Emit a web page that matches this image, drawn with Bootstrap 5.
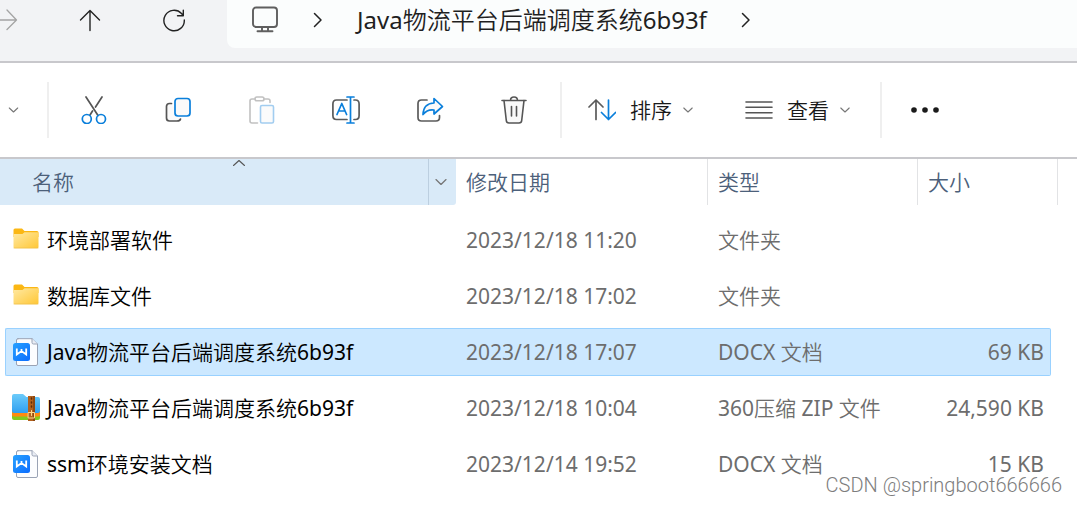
<!DOCTYPE html>
<html lang="zh-CN">
<head>
<meta charset="utf-8">
<meta name="viewport" content="width=device-width, initial-scale=1">
<title>Java物流平台后端调度系统6b93f</title>
<link href="https://cdn.jsdelivr.net/npm/bootstrap@5.3.0/dist/css/bootstrap.min.css" rel="stylesheet">
<style>
  body { font-family: "Noto Sans", "Noto Sans CJK SC", sans-serif; font-size: 21px; line-height: 28px; color: #000; background: #fff; }
  svg { display: block; flex: none; fill: none; stroke-linecap: round; stroke-linejoin: round; }
  button { border: 0; background: none; padding: 0; color: inherit; }

  .nav-strip { background: #f2f3f5; border-bottom: 2px solid #c8c8cc; padding-bottom: 13px; }
  .nav-strip > button { width: 84px; height: 40px; }
  .nav-strip > .go-forward { width: 48px; }
  .path-box { height: 48px; margin-left: 11px; padding: 0 24px 8px; background: #fbfdfd; border-bottom-left-radius: 8px; font-size: 24px; font-weight: 350; color: #1f1f1f; }
  .path-box a { color: inherit; }
  .path-box .sep { margin: 0 34px; }

  .tool-strip { height: 96px; border-bottom: 2px solid #c8c8cc; color: #1a1a1a; }
  .tool-strip button { height: 56px; }
  .icon-group { margin: 0 4px 0 3px; }
  .icon-btn { width: 84px; }
  .menu-btn { padding: 0 26px; gap: 14px; font-weight: 350; }
  .menu-btn .caret { margin-left: -3px; }
  .rule { width: 2px; height: 56px; background: #efefef; flex: none; }

  .files { table-layout: fixed; width: 100%; border-collapse: collapse; }
  .files th, .files td { padding: 0; font-weight: 400; white-space: nowrap; }
  .head-cell { height: 46px; margin-bottom: 7px; padding: 0 10px; border-right: 1px solid #e2e3e5; color: #4c607a; font-weight: 350; }
  .head-sorted { position: relative; padding: 0 0 0 32px; border: 0; background: #d9eaf8; border-bottom-right-radius: 3px; }
  .head-sorted .sort-mark { position: absolute; top: 0; left: 50%; margin-left: 4px; }
  .head-sorted button { width: 28px; height: 46px; padding-right: 3px; border-left: 1px solid #bccfe0; }
  .body-cell { height: 48px; margin: 4px 0; padding: 0 10px; border: 1px solid transparent; border-width: 1px 0; color: #6d6d6d; }
  .body-cell.kind { font-weight: 350; }
  .body-cell.first { margin-left: 5px; padding: 0 0 0 6px; gap: 7px; border-left-width: 1px; color: #000; border-radius: 2px 0 0 2px; font-weight: 350; }
  .body-cell.last { margin-right: 7px; padding-right: 6px; border-right-width: 1px; border-radius: 0 2px 2px 0; }
  .selected .body-cell { background: #cce8ff; border-color: #99d1ff; }
  .col-date { width: 252px; } .col-type { width: 210px; } .col-size { width: 140px; } .col-rest { width: 19px; }

  .stamp { position: absolute; right: 15px; bottom: 10px; font: 300 20px/20px Roboto, sans-serif; color: #7d7d7d; text-shadow: 0 0 2px #fff, 1px 1px 1px #fff; }
</style>
</head>
<body>
<div class="position-relative overflow-hidden min-vh-100">

<svg width="0" height="0" class="position-absolute" aria-hidden="true">
  <defs>
    <linearGradient id="gFolder" x1="0" y1="0" x2="1" y2="1"><stop offset="0" stop-color="#ffe9a3"/><stop offset="1" stop-color="#ffc735"/></linearGradient>
    <linearGradient id="gDoc" x1="0" y1="0" x2="1" y2="1"><stop offset="0" stop-color="#28a2ff"/><stop offset="1" stop-color="#0a6cff"/></linearGradient>
    <linearGradient id="gZip" x1="0" y1="0" x2="0" y2="1"><stop offset="0" stop-color="#6ccbfa"/><stop offset="1" stop-color="#2f9ff0"/></linearGradient>
    <symbol id="folder" viewBox="0 0 28 28">
      <path d="M1.500 4Q1.500 2.500 3 2.500H10L12.500 5H25Q26.500 5 26.500 6.500V11H1.500Z" fill="#fbb714"/>
      <path d="M1.500 8H10.500L12.500 6.200H25.500Q26.500 6.200 26.500 7.200V20.700Q26.500 22.200 25 22.200H3Q1.500 22.200 1.500 20.700Z" fill="url(#gFolder)"/>
      <path d="M2 22H26" stroke="#eebf4b" stroke-width=".7"/>
    </symbol>
    <symbol id="docx" viewBox="0 0 28 28">
      <path d="M6 .7H20L25.500 6V26Q25.500 27.500 24 27.500H6Q4.500 27.500 4.500 26V2Q4.500 .7 6 .7Z" fill="#fcfdff" stroke="#9aa3b5"/>
      <path d="M20 .7V4.500Q20 6 21.500 6H25.500" fill="#e9edf5" stroke="#9aa3b5"/>
      <rect x="1" y="5" width="17" height="18" rx="2.500" fill="url(#gDoc)"/>
      <path d="M4.800 10.500V16.500L9.500 13L14.200 16.500V10.500M9.500 11V13.500" stroke="#fff" stroke-width="1.800" stroke-linejoin="miter" stroke-linecap="butt"/>
    </symbol>
    <symbol id="zip" viewBox="0 0 28 28">
      <path d="M0 20H28V24Q28 26 26 26H2Q0 26 0 24Z" fill="#84c91f"/>
      <path d="M0 16H28V21Q28 22.500 26 22.500H2Q0 22.500 0 21Z" fill="#ff8a10"/>
      <path d="M0 2Q0 0 2 0H11L14.500 3H26Q28 3 28 5V17Q28 19 26 19H2Q0 19 0 17Z" fill="url(#gZip)"/>
      <path d="M16 2H23V27H16Z" fill="#b3611c"/><path d="M21 2H23V27H21Z" fill="#8c4812"/>
      <path d="M19.500 4V16" stroke="#5c2c08" stroke-width="1.500" stroke-dasharray="1 3"/>
      <path d="M16.500 18.500H22.500V24H16.500ZM19.500 16.500V21.500" stroke="#ffd88a" stroke-width="1"/>
    </symbol>
    <symbol id="down" viewBox="0 0 10 10"><path d="M.8 3L5 7L9.200 3" stroke="#777" stroke-width="1.100"/></symbol>
    <symbol id="next" viewBox="0 0 10 16"><path d="M1.500 1.500L8 8L1.500 14.500" stroke="#222" stroke-width="1.500"/></symbol>
  </defs>
</svg>

<nav class="nav-strip d-flex" aria-label="导航">
  <button class="go-forward" aria-label="前进"><svg width="18" height="24" viewBox="0 0 18 24" stroke="#a4a4a4" stroke-width="1.300"><path d="M0 12H16.500M7 2L16.500 12L7 21.500"/></svg></button>
  <button class="d-flex align-items-center justify-content-center" aria-label="向上"><svg width="22" height="24" viewBox="0 0 22 24" stroke="#222" stroke-width="1.400"><path d="M11 22.500V2.500M1.500 12L11 2.500L20.500 12"/></svg></button>
  <button class="d-flex align-items-center justify-content-center" aria-label="刷新"><svg width="24" height="24" viewBox="0 0 24 24" stroke="#222" stroke-width="1.400"><path d="M22.300 12A10.200 10.200 0 1 1 19.500 5.500L21.300 7.500M21.300 2.300V7.800H15.500"/></svg></button>
  <div class="path-box d-flex align-items-center flex-grow-1 text-nowrap">
    <a href="#" aria-label="此电脑"><svg width="28" height="28" viewBox="0 0 28 28" stroke="#5f5f5f" stroke-width="1.900"><rect x="2" y="1.500" width="24" height="19.500" rx="3"/><path d="M11 22V25M17 22V25M6.500 25.300H21.500"/></svg></a>
    <svg class="sep" width="10" height="16"><use href="#next"/></svg>
    <a href="#" class="text-decoration-none"><span class="fw-normal">Java</span>物流平台后端调度系统<span class="fw-normal">6b93f</span></a>
    <svg class="sep" width="10" height="16"><use href="#next"/></svg>
  </div>
</nav>

<div class="tool-strip d-flex align-items-center" role="toolbar" aria-label="工具栏">
  <button class="d-flex align-items-center ps-2 pe-4 me-1" aria-label="新建"><svg width="11" height="10"><use href="#down"/></svg></button>
  <span class="rule"></span>
  <div class="icon-group d-flex">
    <button class="icon-btn d-flex align-items-center justify-content-center" aria-label="剪切"><svg width="28" height="28" viewBox="0 0 28 28" stroke-width="1.700"><path d="M6 1L18 19.500M22 1L15.500 11M12.500 15L10 19" stroke="#555"/><g stroke="#0a7fdb"><circle cx="6.800" cy="23" r="4.500"/><circle cx="21" cy="23" r="4.500"/></g></svg></button>
    <button class="icon-btn d-flex align-items-center justify-content-center" aria-label="复制"><svg width="28" height="28" viewBox="0 0 28 28" stroke-width="1.700"><path d="M7.500 7.500H5.500Q2.500 7.500 2.500 10.500V22Q2.500 25 5.500 25H13Q16 25 16.500 23" fill="#fafafa" stroke="#555"/><rect x="11" y="2.500" width="15" height="17.500" rx="3" fill="#fafafa" stroke="#0a7fdb"/></svg></button>
    <button class="icon-btn d-flex align-items-center justify-content-center" aria-label="粘贴" disabled><svg width="28" height="28" viewBox="0 0 28 28" stroke-width="1.600"><path d="M7 3H4Q2 3 2 5V25Q2 27 4 27H9.500M16.500 3H20Q22 3 22 5V6.500" stroke="#c1c1c1"/><rect x="7" y="1" width="9" height="3.800" rx="1.900" stroke="#c1c1c1"/><rect x="12.500" y="9.500" width="13" height="17.500" rx="1.500" stroke="#a2cdf0" fill="#fbfbfb"/></svg></button>
    <button class="icon-btn d-flex align-items-center justify-content-center" aria-label="重命名"><svg width="28" height="28" viewBox="0 0 28 28" stroke-width="1.700"><path d="M15 4H4.500Q.9 4 .9 8V19.500Q.9 23.500 4.500 23.500H15M22 4H23.500Q27.100 4 27.100 8V19.500Q27.100 23.500 23.500 23.500H22" stroke="#5b5b5b"/><path d="M5 18.500L9.800 7.500L14.600 18.500M6.500 15H13M18.500 1V27M15 1H22M15 27H22" stroke="#0a7fdb"/></svg></button>
    <button class="icon-btn d-flex align-items-center justify-content-center" aria-label="共享"><svg width="28" height="28" viewBox="0 0 28 28" stroke-width="1.700"><path d="M11 4H5.500Q2 4 2 7.500V21.500Q2 25 5.500 25H20Q23.500 25 23.500 21.500V19.500" stroke="#5b5b5b"/><path d="M18 2.500L26.500 10.500L18 18V14Q11.500 13 7 18.500Q7.500 7.500 18 7Z" stroke="#0a7fdb" fill="#fafafa"/></svg></button>
    <button class="icon-btn d-flex align-items-center justify-content-center" aria-label="删除"><svg width="28" height="28" viewBox="0 0 28 28" stroke-width="1.600" stroke="#555"><path d="M4 4.500L6.300 24.500Q6.500 27 9 27H19Q21.500 27 21.700 24.500L24 4.500" fill="#f9f9f9"/><path d="M2 4.500H26M10.500 4.500Q10.500 1 14 1T17.500 4.500M11.500 10.500V20M16.500 10.500V20"/></svg></button>
  </div>
  <span class="rule"></span>
  <button class="menu-btn d-flex align-items-center"><svg width="28" height="28" viewBox="0 0 28 28" stroke-width="1.700"><path d="M8 23.500V4M1 11L8 4L15 11" stroke="#5b5b5b"/><path d="M20.500 4V23.500M13.500 16.500L20.500 23.500L27.500 16.500" stroke="#0a7fdb"/></svg>排序<svg class="caret" width="10" height="10"><use href="#down"/></svg></button>
  <button class="menu-btn d-flex align-items-center"><svg width="28" height="28" viewBox="0 0 28 28" stroke="#555" stroke-width="1.600"><path d="M1 6H27M1 11.300H27M1 16.700H27M1 22H27"/></svg>查看<svg class="caret" width="10" height="10"><use href="#down"/></svg></button>
  <span class="rule ms-1"></span>
  <button class="d-flex align-items-center px-4 ms-1" aria-label="更多"><svg width="30" height="8" viewBox="0 0 30 8"><g fill="#1a1a1a"><circle cx="4" cy="4" r="2.800"/><circle cx="15" cy="4" r="2.800"/><circle cx="26" cy="4" r="2.800"/></g></svg></button>
</div>

<table class="files">
  <colgroup><col><col class="col-date"><col class="col-type"><col class="col-size"><col class="col-rest"></colgroup>
  <thead>
    <tr>
      <th scope="col" aria-sort="ascending"><div class="head-cell head-sorted d-flex align-items-center justify-content-between">名称
        <svg class="sort-mark" width="14" height="9" viewBox="0 0 14 9" stroke="#555" stroke-width="1.100"><path d="M1.500 6.500L7 1.500L12.500 6.500"/></svg>
        <button class="d-flex align-items-center justify-content-center" aria-label="筛选"><svg width="12" height="12"><use href="#down"/></svg></button></div></th>
      <th scope="col"><div class="head-cell d-flex align-items-center">修改日期</div></th>
      <th scope="col"><div class="head-cell d-flex align-items-center">类型</div></th>
      <th scope="col"><div class="head-cell d-flex align-items-center">大小</div></th>
      <th></th>
    </tr>
  </thead>
  <tbody>
    <tr>
      <td><div class="body-cell first d-flex align-items-center"><svg width="28" height="28"><use href="#folder"/></svg>环境部署软件</div></td>
      <td><div class="body-cell d-flex align-items-center">2023/12/18 11:20</div></td>
      <td><div class="body-cell kind d-flex align-items-center">文件夹</div></td>
      <td colspan="2"></td>
    </tr>
    <tr>
      <td><div class="body-cell first d-flex align-items-center"><svg width="28" height="28"><use href="#folder"/></svg>数据库文件</div></td>
      <td><div class="body-cell d-flex align-items-center">2023/12/18 17:02</div></td>
      <td><div class="body-cell kind d-flex align-items-center">文件夹</div></td>
      <td colspan="2"></td>
    </tr>
    <tr class="selected" aria-selected="true">
      <td><div class="body-cell first d-flex align-items-center"><svg width="28" height="28"><use href="#docx"/></svg><span><span class="fw-normal">Java</span>物流平台后端调度系统<span class="fw-normal">6b93f</span></span></div></td>
      <td><div class="body-cell d-flex align-items-center">2023/12/18 17:07</div></td>
      <td><div class="body-cell kind d-flex align-items-center"><span><span class="fw-normal">DOCX </span>文档</span></div></td>
      <td><div class="body-cell last d-flex align-items-center justify-content-end">69 KB</div></td>
      <td></td>
    </tr>
    <tr>
      <td><div class="body-cell first d-flex align-items-center"><svg width="28" height="28"><use href="#zip"/></svg><span><span class="fw-normal">Java</span>物流平台后端调度系统<span class="fw-normal">6b93f</span></span></div></td>
      <td><div class="body-cell d-flex align-items-center">2023/12/18 10:04</div></td>
      <td><div class="body-cell kind d-flex align-items-center"><span><span class="fw-normal">360</span>压缩<span class="fw-normal"> ZIP </span>文件</span></div></td>
      <td><div class="body-cell last d-flex align-items-center justify-content-end">24,590 KB</div></td>
      <td></td>
    </tr>
    <tr>
      <td><div class="body-cell first d-flex align-items-center"><svg width="28" height="28"><use href="#docx"/></svg><span><span class="fw-normal">ssm</span>环境安装文档</span></div></td>
      <td><div class="body-cell d-flex align-items-center">2023/12/14 19:52</div></td>
      <td><div class="body-cell kind d-flex align-items-center"><span><span class="fw-normal">DOCX </span>文档</span></div></td>
      <td><div class="body-cell last d-flex align-items-center justify-content-end">15 KB</div></td>
      <td></td>
    </tr>
  </tbody>
</table>
<div class="stamp">CSDN @springboot666666</div>
</div>
<script src="https://cdn.jsdelivr.net/npm/bootstrap@5.3.0/dist/js/bootstrap.bundle.min.js"></script>
</body>
</html>
